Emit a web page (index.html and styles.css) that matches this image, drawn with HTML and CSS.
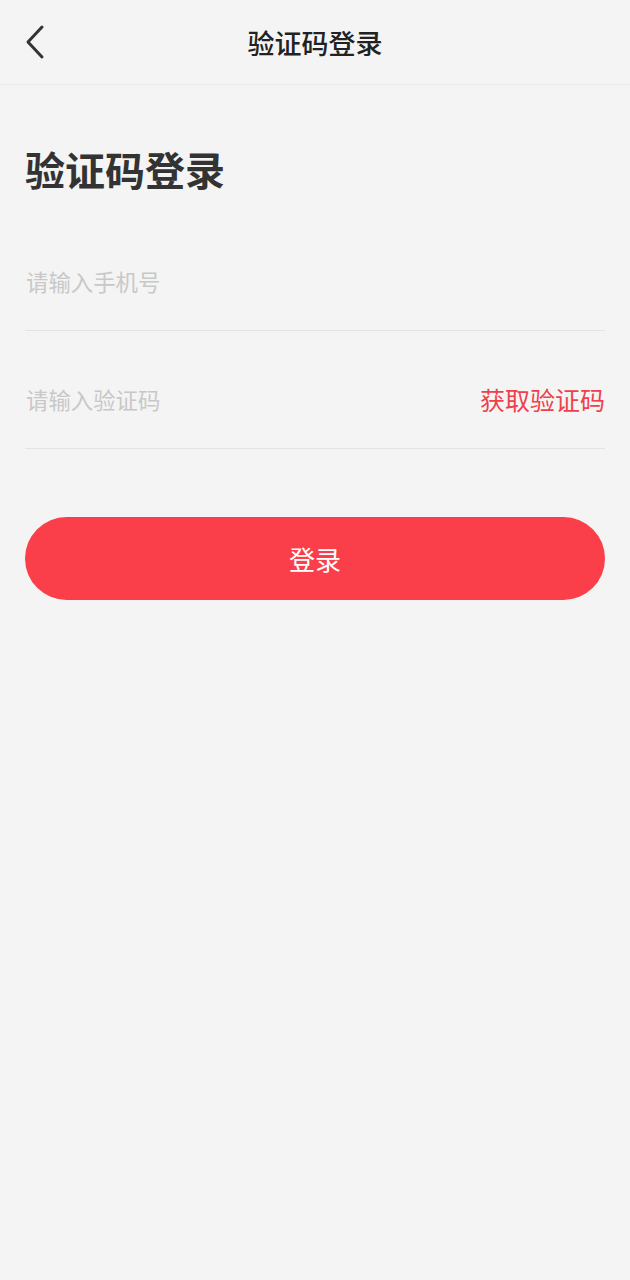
FILE: index.html
```html
<!DOCTYPE html>
<html lang="zh-CN">
<head>
  <meta charset="UTF-8">
  <meta name="viewport" content="width=device-width, initial-scale=1">
  <title>验证码登录</title>
  <link rel="stylesheet" href="styles.css">
</head>
<body>

  <div class="header">
    <a class="back" href="#">
      <svg width="22" height="36" viewBox="0 0 22 36">
        <polyline points="18,3 4,18 18,33" fill="none" stroke="#333" stroke-width="3" stroke-linecap="round" stroke-linejoin="round"/>
      </svg>
    </a>
    <div class="header-title">验证码登录</div>
  </div>

  <div class="content">
    <h1>验证码登录</h1>
    <div class="field">
      <input type="tel" placeholder="请输入手机号">
    </div>
    <div class="field">
      <input type="text" placeholder="请输入验证码">
      <a class="get-code" href="#">获取验证码</a>
    </div>
    <button class="login-btn">登录</button>
  </div>

</body>
</html>
```

FILE: styles.css
```css
body {
  margin: 0;
  background: #f4f4f4;
  color: #333;
  font-family: "Noto Sans CJK SC", "Noto Sans", sans-serif;
}
.header {
  height: 84px;
  border-bottom: 1px solid #e9e9e9;
  display: flex;
  align-items: center;
  justify-content: center;
  position: relative;
}
.back {
  position: absolute;
  left: 24px;
  top: 24px;
  display: flex;
}
.header-title {
  font-size: 27px;
  font-weight: 500;
  color: #222;
}
.content {
  padding: 0 25px;
}
h1 {
  margin: 56px 0 16px 0;
  font-size: 40px;
  line-height: 56px;
  font-weight: 700;
  color: #333;
}
.field {
  display: flex;
  align-items: center;
  padding: 48px 0 29px 1px;
  border-bottom: 1px solid #e3e3e3;
}
.field input {
  flex: 1;
  min-width: 0;
  height: 40px;
  padding: 0;
  border: none;
  outline: none;
  background: transparent;
  font-family: inherit;
  font-size: 22.4px;
  color: #333;
}
.field input::placeholder {
  color: #c8c8c8;
}
.get-code {
  font-size: 25px;
  color: #ef404b;
  text-decoration: none;
  line-height: 40px;
}
.login-btn {
  display: block;
  width: 100%;
  height: 83px;
  margin-top: 68px;
  border: none;
  border-radius: 42px;
  background: #fb3f4a;
  color: #fff;
  font-family: inherit;
  font-size: 26px;
  cursor: pointer;
}
```
